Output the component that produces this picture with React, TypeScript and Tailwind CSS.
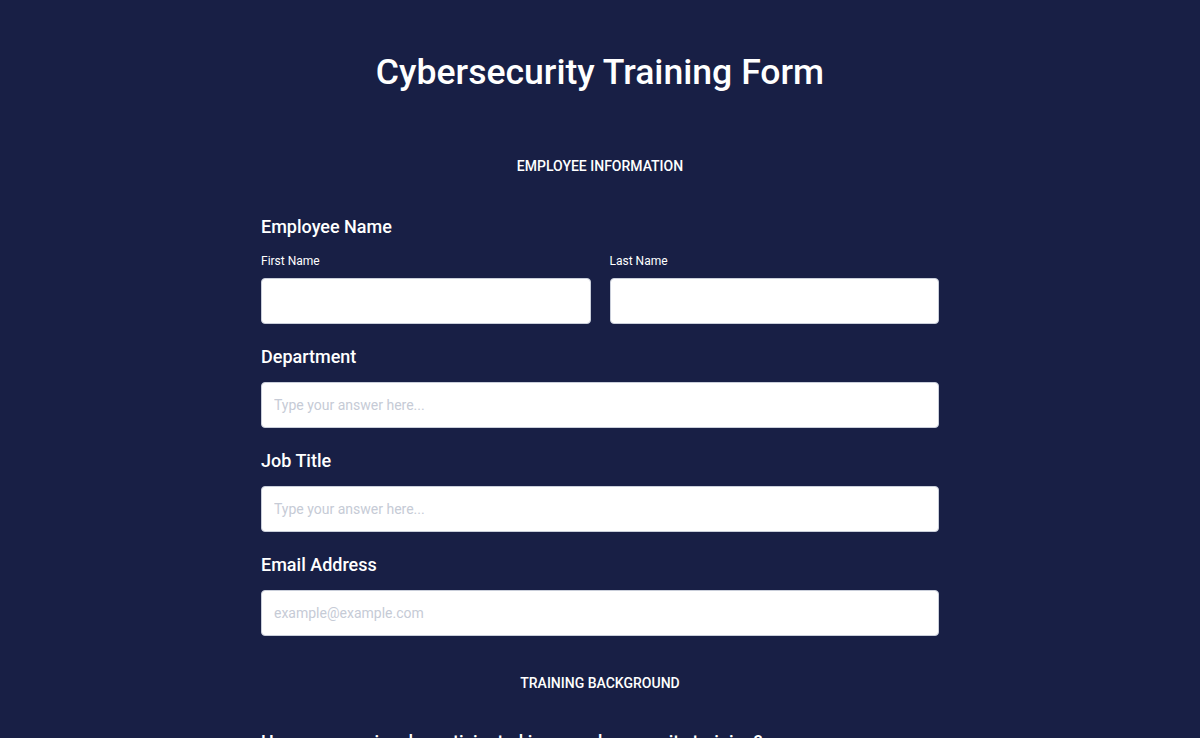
import React from "react";

// Simple text field used for the single-line questions
function Field({ label, placeholder }: { label: string; placeholder?: string }) {
  return (
    <div className="mb-[21px]">
      <label className="block text-[18px] leading-6 font-medium text-white mb-[13px]">
        {label}
      </label>
      <input
        type="text"
        placeholder={placeholder}
        className="w-full h-[46px] px-3 rounded-[4px] border border-[#c9ceda] bg-white text-[14px] text-[#2c3345] placeholder:text-[#c6cbd6] outline-none"
      />
    </div>
  );
}

export default function App() {
  return (
    <div
      className="min-h-screen bg-[#181f45] text-white overflow-hidden"
      style={{ fontFamily: "Roboto, 'Liberation Sans', sans-serif" }}
    >
      <div className="w-[678px] mx-auto pt-[52px]">
        {/* Page Header */}
        <h1 className="text-center text-[35.6px] leading-10 font-medium mb-16">
          Cybersecurity Training Form
        </h1>

        <h2 className="text-center text-[14px] leading-5 font-medium uppercase mb-[39px]">
          Employee Information
        </h2>

        {/* Employee Name */}
        <div className="mb-[21px]">
          <div className="text-[18px] leading-6 font-medium mb-[14px]">Employee Name</div>
          <div className="grid grid-cols-2 gap-[19px]">
            <div>
              <label className="block text-[12px] leading-4 text-white mb-[9px]">First Name</label>
              <input
                type="text"
                className="w-full h-[46px] px-3 rounded-[4px] border border-[#c9ceda] bg-white outline-none"
              />
            </div>
            <div>
              <label className="block text-[12px] leading-4 text-white mb-[9px]">Last Name</label>
              <input
                type="text"
                className="w-full h-[46px] px-3 rounded-[4px] border border-[#c9ceda] bg-white outline-none"
              />
            </div>
          </div>
        </div>

        <Field label="Department" placeholder="Type your answer here..." />
        <Field label="Job Title" placeholder="Type your answer here..." />
        <Field label="Email Address" placeholder="example@example.com" />

        <h2 className="text-center text-[14px] leading-5 font-medium uppercase mt-[37px] mb-[37px]">
          Training Background
        </h2>

        <div className="text-[18px] leading-6 font-medium">
          Have you previously participated in any cybersecurity training?
        </div>
      </div>
    </div>
  );
}
